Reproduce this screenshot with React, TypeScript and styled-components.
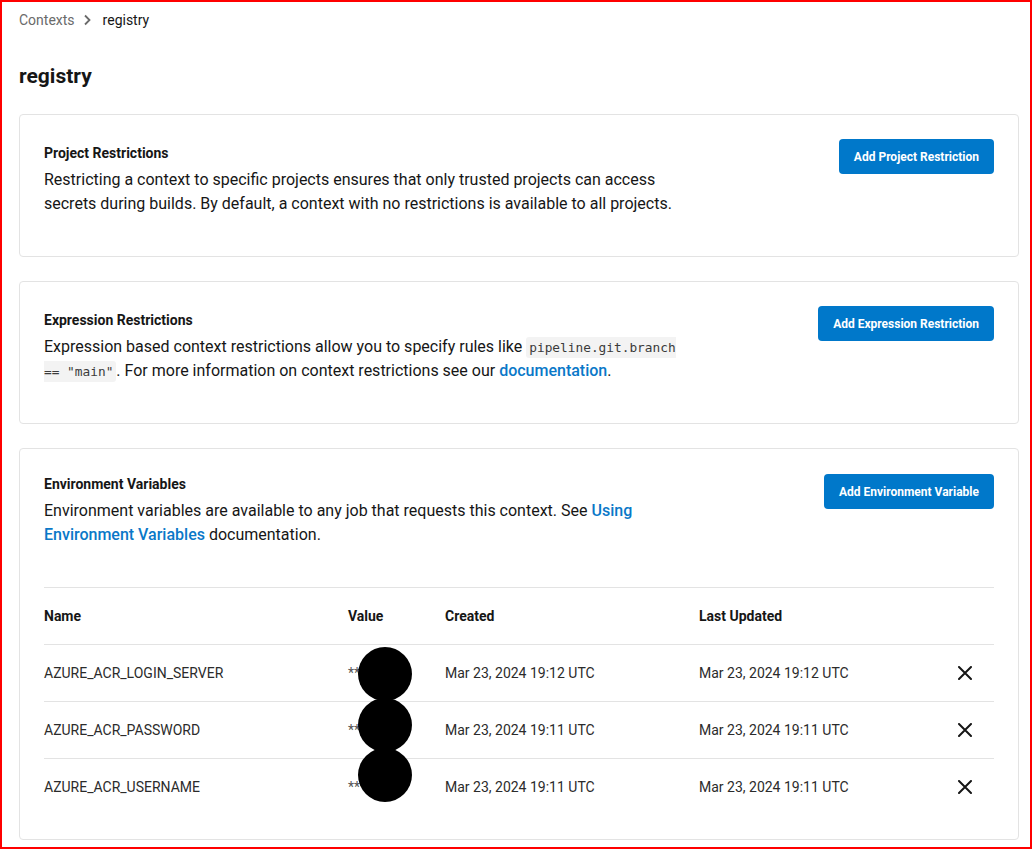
import React from "react";
import styled, { createGlobalStyle } from "styled-components";

const GlobalStyle = createGlobalStyle`
  html, body { margin: 0; padding: 0; background: #fff; }
  body { font-family: Roboto, "Noto Sans", "Liberation Sans", sans-serif; color: #161616; }
  * { box-sizing: border-box; }
`;

const Frame = styled.div`
  width: 1032px;
  height: 849px;
  border: 2px solid #ff0000;
  padding: 8px 11px 0 17px;
  overflow: hidden;
  background: #fff;
`;

const Breadcrumb = styled.nav`
  display: flex;
  align-items: center;
  font-size: 14px;
  line-height: 20px;
  height: 20px;
`;

const Crumb = styled.span<{ $current?: boolean }>`
  color: ${(p) => (p.$current ? "#161616" : "#6a6a6a")};
  font-weight: 400;
`;

const Chevron = styled.svg`
  width: 12px;
  height: 12px;
  margin: 0 10px 0 6px;
`;

const PageTitle = styled.h1`
  margin: 32px 0 24px;
  font-size: 21px;
  line-height: 28px;
  font-weight: 700;
  color: #161616;
`;

const Card = styled.section<{ $top?: number }>`
  border: 1px solid #e3e3e3;
  border-radius: 4px;
  padding: ${(p) => p.$top ?? 24}px 24px 24px;
  margin-bottom: 24px;
  background: #fff;
`;

const CardHeader = styled.div`
  display: flex;
  justify-content: space-between;
  align-items: flex-start;
`;

const CardText = styled.div`
  max-width: 640px;
`;

const CardTitle = styled.h2`
  margin: 0;
  font-size: 14px;
  line-height: 28px;
  font-weight: 700;
  color: #161616;
`;

const Description = styled.p`
  margin: 1px 0 16px;
  font-size: 16px;
  line-height: 24px;
  color: #161616;
`;

const Code = styled.code`
  font-family: "DejaVu Sans Mono", "Liberation Mono", monospace;
  font-size: 12.8px;
  line-height: 1;
  background: #f3f3f3;
  color: #3b3b3b;
  padding: 3px 3px;
  border-radius: 3px;
`;

const Link = styled.a`
  color: #0a78c8;
  font-weight: 500;
  text-decoration: none;
`;

const Button = styled.button<{ $offset?: number }>`
  flex: none;
  height: 35px;
  margin-top: ${(p) => p.$offset ?? 0}px;
  padding: 0 15px;
  border: none;
  border-radius: 4px;
  background: #0078ca;
  color: #fff;
  font-family: Roboto, "Liberation Sans", sans-serif;
  font-size: 12px;
  font-weight: 700;
  cursor: pointer;
`;

const Table = styled.div`
  margin-top: 24px;
  border-top: 1px solid #e3e3e3;
`;

const Row = styled.div<{ $last?: boolean }>`
  display: grid;
  grid-template-columns: 304px 97px 254px 1fr 58px;
  align-items: center;
  height: ${(p) => (p.$last ? 56 : 57)}px;
  border-bottom: ${(p) => (p.$last ? "none" : "1px solid #e3e3e3")};
`;

const HeadCell = styled.div`
  font-size: 14px;
  font-weight: 700;
  color: #161616;
`;

const Cell = styled.div`
  font-size: 14px;
  color: #2b2b2b;
  position: relative;
  height: 100%;
  display: flex;
  align-items: center;
`;

const Masked = styled.span`
  color: #555;
`;

const Blob = styled.span`
  position: absolute;
  left: 10px;
  width: 54px;
  height: 54px;
  border-radius: 50%;
  background: #000;
  z-index: 2;
`;

const ActionCell = styled.div`
  display: flex;
  justify-content: center;
  align-items: center;
`;

const DeleteButton = styled.button`
  background: none;
  border: none;
  padding: 0;
  display: flex;
  cursor: pointer;
`;

const CloseIcon = () => (
  <svg width="14" height="14" viewBox="0 0 14 14">
    <path d="M1 1 L13 13 M13 1 L1 13" stroke="#161616" strokeWidth="2" strokeLinecap="round" />
  </svg>
);

const rows = [
  { name: "AZURE_ACR_LOGIN_SERVER", created: "Mar 23, 2024 19:12 UTC", updated: "Mar 23, 2024 19:12 UTC", blobTop: 2 },
  { name: "AZURE_ACR_PASSWORD", created: "Mar 23, 2024 19:11 UTC", updated: "Mar 23, 2024 19:11 UTC", blobTop: -4 },
  { name: "AZURE_ACR_USERNAME", created: "Mar 23, 2024 19:11 UTC", updated: "Mar 23, 2024 19:11 UTC", blobTop: -11 },
];

export default function App() {
  return (
    <>
      <GlobalStyle />
      <Frame>
        <Breadcrumb>
          <Crumb>Contexts</Crumb>
          <Chevron viewBox="0 0 12 12">
            <path d="M4 1.5 L8.5 6 L4 10.5" fill="none" stroke="#6a6a6a" strokeWidth="1.8" />
          </Chevron>
          <Crumb $current>registry</Crumb>
        </Breadcrumb>
        <PageTitle>registry</PageTitle>

        <Card>
          <CardHeader>
            <CardText>
              <CardTitle>Project Restrictions</CardTitle>
              <Description>
                Restricting a context to specific projects ensures that only trusted projects can access
                secrets during builds. By default, a context with no restrictions is available to all projects.
              </Description>
            </CardText>
            <Button>Add Project Restriction</Button>
          </CardHeader>
        </Card>

        <Card>
          <CardHeader>
            <CardText>
              <CardTitle>Expression Restrictions</CardTitle>
              <Description>
                Expression based context restrictions allow you to specify rules like{" "}
                <Code>pipeline.git.branch == "main"</Code>. For more information on context restrictions see
                our <Link href="#">documentation</Link>.
              </Description>
            </CardText>
            <Button>Add Expression Restriction</Button>
          </CardHeader>
        </Card>

        <Card $top={21}>
          <CardHeader>
            <CardText>
              <CardTitle>Environment Variables</CardTitle>
              <Description>
                Environment variables are available to any job that requests this context. See{" "}
                <Link href="#">Using Environment Variables</Link> documentation.
              </Description>
            </CardText>
            <Button $offset={4}>Add Environment Variable</Button>
          </CardHeader>
          <Table>
            <Row>
              <HeadCell>Name</HeadCell>
              <HeadCell>Value</HeadCell>
              <HeadCell>Created</HeadCell>
              <HeadCell>Last Updated</HeadCell>
              <HeadCell />
            </Row>
            {rows.map((r, i) => (
              <Row key={r.name} $last={i === rows.length - 1}>
                <Cell>{r.name}</Cell>
                <Cell>
                  <Masked>****</Masked>
                  <Blob style={{ top: r.blobTop }} />
                </Cell>
                <Cell>{r.created}</Cell>
                <Cell>{r.updated}</Cell>
                <ActionCell>
                  <DeleteButton aria-label="Delete">
                    <CloseIcon />
                  </DeleteButton>
                </ActionCell>
              </Row>
            ))}
          </Table>
        </Card>
      </Frame>
    </>
  );
}
